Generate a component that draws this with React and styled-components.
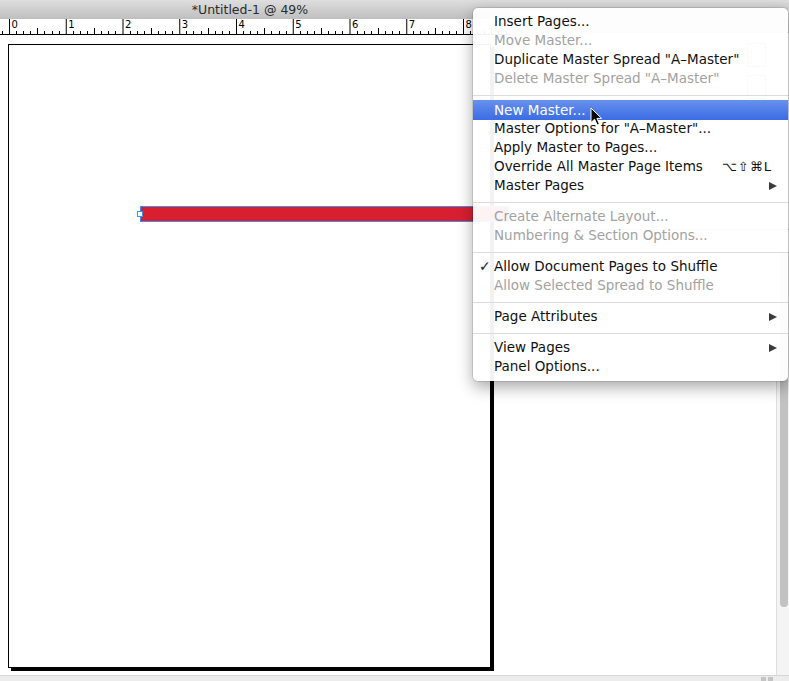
import React from 'react'
import { styled, createGlobalStyle } from 'styled-components'

const GlobalStyle = createGlobalStyle`
    html, body {
        margin: 0;
        padding: 0;
        background: #fff;
    }
    body {
        font-family: "DejaVu Sans", "Liberation Sans", sans-serif;
    }
`;

const INCH = 56.75
const X0 = 9

const menuItems = [
    { label: 'Insert Pages...' },
    { label: 'Move Master...', disabled: true },
    { label: 'Duplicate Master Spread "A–Master"' },
    { label: 'Delete Master Spread "A–Master"', disabled: true },
    'sep',
    { label: 'New Master...', active: true },
    { label: 'Master Options for "A–Master"...' },
    { label: 'Apply Master to Pages...' },
    { label: 'Override All Master Page Items', shortcut: '⌥⇧⌘L' },
    { label: 'Master Pages', submenu: true },
    'sep',
    { label: 'Create Alternate Layout...', disabled: true },
    { label: 'Numbering & Section Options...', disabled: true },
    'sep',
    { label: 'Allow Document Pages to Shuffle', checked: true },
    { label: 'Allow Selected Spread to Shuffle', disabled: true },
    'sep',
    { label: 'Page Attributes', submenu: true },
    'sep',
    { label: 'View Pages', submenu: true },
    { label: 'Panel Options...' },
]

// ruler ticks; numbers past 8 sit under the menu so they're left out
function RulerMarks() {
    const marks = []
    for (let i = -1; i < 14; i++) {
        const x = X0 + i * INCH
        marks.push(<line key={'m' + i} x1={x + 0.5} x2={x + 0.5} y1={0} y2={15} stroke="#000" strokeWidth="1" />)
        if (i >= 0 && i <= 8) {
            marks.push(<text key={'t' + i} x={x + 2.5} y={9} fontSize="10" fontFamily="DejaVu Sans, sans-serif" fill="#000">{i}</text>)
        }
        for (let j = 1; j < 8; j++) {
            const tx = Math.round(x + (j * INCH) / 8) + 0.5
            const len = j === 4 ? 6 : 3
            marks.push(<line key={'s' + i + '-' + j} x1={tx} x2={tx} y1={15 - len} y2={15} stroke="#000" strokeWidth="1" />)
        }
    }
    return (
        <svg width="776" height="15" viewBox="0 0 776 15">
            {marks}
        </svg>
    )
}

export default function App() {
    return (
        <Window>
            <GlobalStyle />
            <TitleBar>
                <Title>*Untitled-1 @ 49%</Title>
            </TitleBar>
            <Body>
                <Main>
                    <Ruler>
                        <RulerMarks />
                    </Ruler>
                    <Pasteboard>
                        <Page>
                            <RedBar />
                            <Handle />
                        </Page>
                    </Pasteboard>
                </Main>
                <ScrollTrack>
                    <ScrollThumb />
                </ScrollTrack>
            </Body>
            <StatusBar>
                <StatusBox />
                <StatusBox />
            </StatusBar>

            <PagesPanel>
                <PanelTabs>
                    <PanelTab $active />
                    <PanelTab />
                    <PanelTab />
                </PanelTabs>
                <PanelBody>
                    <Thumb />
                    <Thumb />
                </PanelBody>
                <PanelFooter />
            </PagesPanel>

            <Menu>
                {menuItems.map((item, i) =>
                    item === 'sep' ? (
                        <Separator key={i} />
                    ) : (
                        <MenuRow key={i} $active={item.active} $disabled={item.disabled}>
                            <Gutter>{item.checked ? '✓' : ''}</Gutter>
                            <Label>{item.label}</Label>
                            {item.shortcut && <Shortcut>{item.shortcut}</Shortcut>}
                            {item.submenu && <SubArrow />}
                        </MenuRow>
                    )
                )}
            </Menu>

            <Cursor width="13" height="19" viewBox="0 0 13 19">
                <path d="M1 1 L1 15.5 L4.6 12.2 L7.2 18 L9.4 17 L6.9 11.4 L11.6 11.4 Z" fill="#000" stroke="#fff" strokeWidth="1" strokeLinejoin="round" />
            </Cursor>
        </Window>
    )
}

const Window = styled.div`
    position: relative;
    width: 789px;
    height: 681px;
    overflow: hidden;
    display: flex;
    flex-direction: column;
    background: #fff;
`;
const TitleBar = styled.div`
    height: 19px;
    flex: none;
    display: flex;
    align-items: center;
    background: linear-gradient(#dedede, #bfbfbf);
`;
const Title = styled.div`
    width: 500px;
    text-align: center;
    font-size: 12.5px;
    color: #2b2b2b;
    line-height: 19px;
`;
const Body = styled.div`
    flex: 1;
    display: flex;
    min-height: 0;
`;
const Main = styled.div`
    flex: 1;
    display: flex;
    flex-direction: column;
`;
const Ruler = styled.div`
    height: 15px;
    border-bottom: 1px solid #000;
    background: #fff;
    overflow: hidden;
    svg { display: block; }
`;
const Pasteboard = styled.div`
    flex: 1;
    padding: 9px 0 0 8px;
    background: #fff;
`;
const Page = styled.div`
    position: relative;
    box-sizing: border-box;
    width: 483px;
    height: 624px;
    border: 1px solid #000;
    box-shadow: 3px 3px 0 #000;
    background: #fff;
`;
const RedBar = styled.div`
    position: absolute;
    left: 131px;
    top: 161px;
    width: 369px;
    height: 16px;
    box-sizing: border-box;
    background: #d81f30;
    border: 1px solid #3f8fe6;
`;
const Handle = styled.div`
    position: absolute;
    left: 128px;
    top: 166px;
    width: 6px;
    height: 6px;
    box-sizing: border-box;
    background: #fff;
    border: 1px solid #3f8fe6;
`;
const ScrollTrack = styled.div`
    width: 13px;
    flex: none;
    box-sizing: border-box;
    padding: 16px 1px 0 3px;
    background: #f4f4f4;
    border-left: 1px solid #dedede;
`;
const ScrollThumb = styled.div`
    width: 8px;
    height: 572px;
    border-radius: 4px;
    background: #c2c2c2;
`;
const StatusBar = styled.div`
    height: 5px;
    flex: none;
    display: flex;
    justify-content: flex-end;
    align-items: flex-end;
    gap: 2px;
    padding-right: 16px;
    background: #ececec;
    border-top: 1px solid #d6d6d6;
`;
const StatusBox = styled.div`
    width: 5px;
    height: 4px;
    background: #c4c4c4;
`;

const PagesPanel = styled.div`
    position: absolute;
    left: 510px;
    top: 10px;
    width: 279px;
    height: 242px;
    display: flex;
    flex-direction: column;
    background: #fff;
    border-left: 1px solid #c8c8c8;
    border-bottom: 1px solid #c8c8c8;
`;
const PanelTabs = styled.div`
    height: 22px;
    display: flex;
    align-items: stretch;
    background: #dadada;
    border-bottom: 1px solid #b8b8b8;
`;
const PanelTab = styled.div`
    width: 56px;
    border-right: 1px solid #c4c4c4;
    background: ${props => props.$active ? '#f0f0f0' : 'transparent'};
`;
const PanelBody = styled.div`
    flex: 1;
    padding: 10px 24px 0 0;
    display: flex;
    flex-direction: column;
    align-items: flex-end;
    gap: 8px;
`;
const Thumb = styled.div`
    width: 17px;
    height: 22px;
    border: 1px solid #999;
`;
const PanelFooter = styled.div`
    height: 22px;
    border-top: 1px solid #c4c4c4;
`;

const Menu = styled.div`
    position: absolute;
    left: 473px;
    top: 8px;
    width: 315px;
    box-sizing: border-box;
    padding: 4px 0 5px;
    background: rgba(255, 255, 255, 0.95);
    border-radius: 5px;
    box-shadow: 0 0 0 1px rgba(0, 0, 0, 0.1), 0 6px 16px rgba(0, 0, 0, 0.35);
`;
const MenuRow = styled.div`
    height: 19px;
    display: flex;
    align-items: center;
    font-size: 13.5px;
    line-height: 19px;
    white-space: nowrap;
    color: ${props => props.$active ? '#fff' : props.$disabled ? '#a2a2a2' : '#111'};
    background: ${props => props.$active ? 'linear-gradient(#6891ed, #3a6ce3)' : 'transparent'};
    ${props => props.$active && 'height: 20px; margin-bottom: -1px;'}
`;
const Gutter = styled.span`
    width: 21px;
    flex: none;
    box-sizing: border-box;
    padding-left: 6px;
    font-size: 14px;
    color: #222;
`;
const Label = styled.span`
    flex: 1;
`;
const Shortcut = styled.span`
    padding-right: 16px;
    letter-spacing: 1px;
    font-size: 13px;
`;
const SubArrow = styled.span`
    width: 0;
    height: 0;
    margin-right: 11px;
    border-top: 4.5px solid transparent;
    border-bottom: 4.5px solid transparent;
    border-left: 8px solid #3a3a3a;
`;
const Separator = styled.div`
    height: 1px;
    margin: 7px 0 4px;
    background: #dcdcdc;
`;
const Cursor = styled.svg`
    position: absolute;
    left: 590px;
    top: 107px;
`;
